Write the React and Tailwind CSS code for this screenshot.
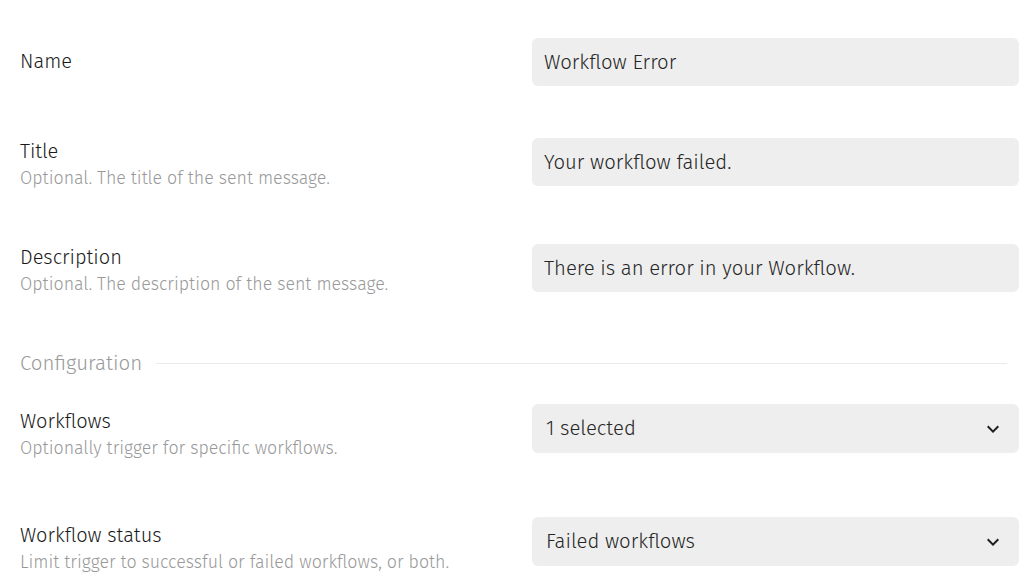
import React from "react";

const font = { fontFamily: '"Fira Sans", "Open Sans", "Noto Sans", sans-serif' };

function Chevron() {
  return (
    <svg width="24" height="24" viewBox="0 0 24 24" className="shrink-0">
      <path d="M7.41 8.59 12 13.17l4.59-4.58L18 10l-6 6-6-6z" fill="#1f1f1f" />
    </svg>
  );
}

function Label({ title, sub }) {
  return (
    <div className="flex flex-col">
      <div className="text-[20px] leading-[26px] font-light text-[#1a1a1a]">{title}</div>
      {sub && <div className="mt-[2px] text-[17.8px] leading-[24px] font-light text-[#999999]">{sub}</div>}
    </div>
  );
}

function Input({ value }) {
  return (
    <div className="w-[487px] h-[48px] rounded-[6px] bg-[#eeeeee] flex items-center px-[12px] text-[20.3px] font-light text-[#262626]">
      {value}
    </div>
  );
}

function Select({ value }) {
  return (
    <div className="w-[487px] h-[49px] rounded-[6px] bg-[#eeeeee] flex items-center justify-between pl-[14px] pr-[14px] text-[20.3px] font-light text-[#262626]">
      <span>{value}</span>
      <Chevron />
    </div>
  );
}

export default function App() {
  return (
    <div className="w-[1027px] h-[585px] bg-white overflow-hidden pl-[20px] pr-[8px]" style={font}>
      <div className="mt-[38px] flex justify-between items-start">
        <div className="pt-[10px]"><Label title="Name" /></div>
        <Input value="Workflow Error" />
      </div>
      <div className="mt-[52px] flex justify-between items-start">
        <Label title="Title" sub="Optional. The title of the sent message." />
        <Input value="Your workflow failed." />
      </div>
      <div className="mt-[54px] flex justify-between items-start">
        <Label title="Description" sub="Optional. The description of the sent message." />
        <Input value="There is an error in your Workflow." />
      </div>
      <div className="mt-[53px] flex items-center gap-[14px] pr-[12px]">
        <span className="text-[20.5px] leading-[28px] font-light text-[#999999]">Configuration</span>
        <div className="flex-1 h-px bg-[#ebebeb]" />
      </div>
      <div className="mt-[27px] flex justify-between items-start">
        <div className="pt-[4px]"><Label title="Workflows" sub="Optionally trigger for specific workflows." /></div>
        <Select value="1 selected" />
      </div>
      <div className="mt-[57px] flex justify-between items-start">
        <div className="pt-[5px]"><Label title="Workflow status" sub="Limit trigger to successful or failed workflows, or both." /></div>
        <Select value="Failed workflows" />
      </div>
    </div>
  );
}
